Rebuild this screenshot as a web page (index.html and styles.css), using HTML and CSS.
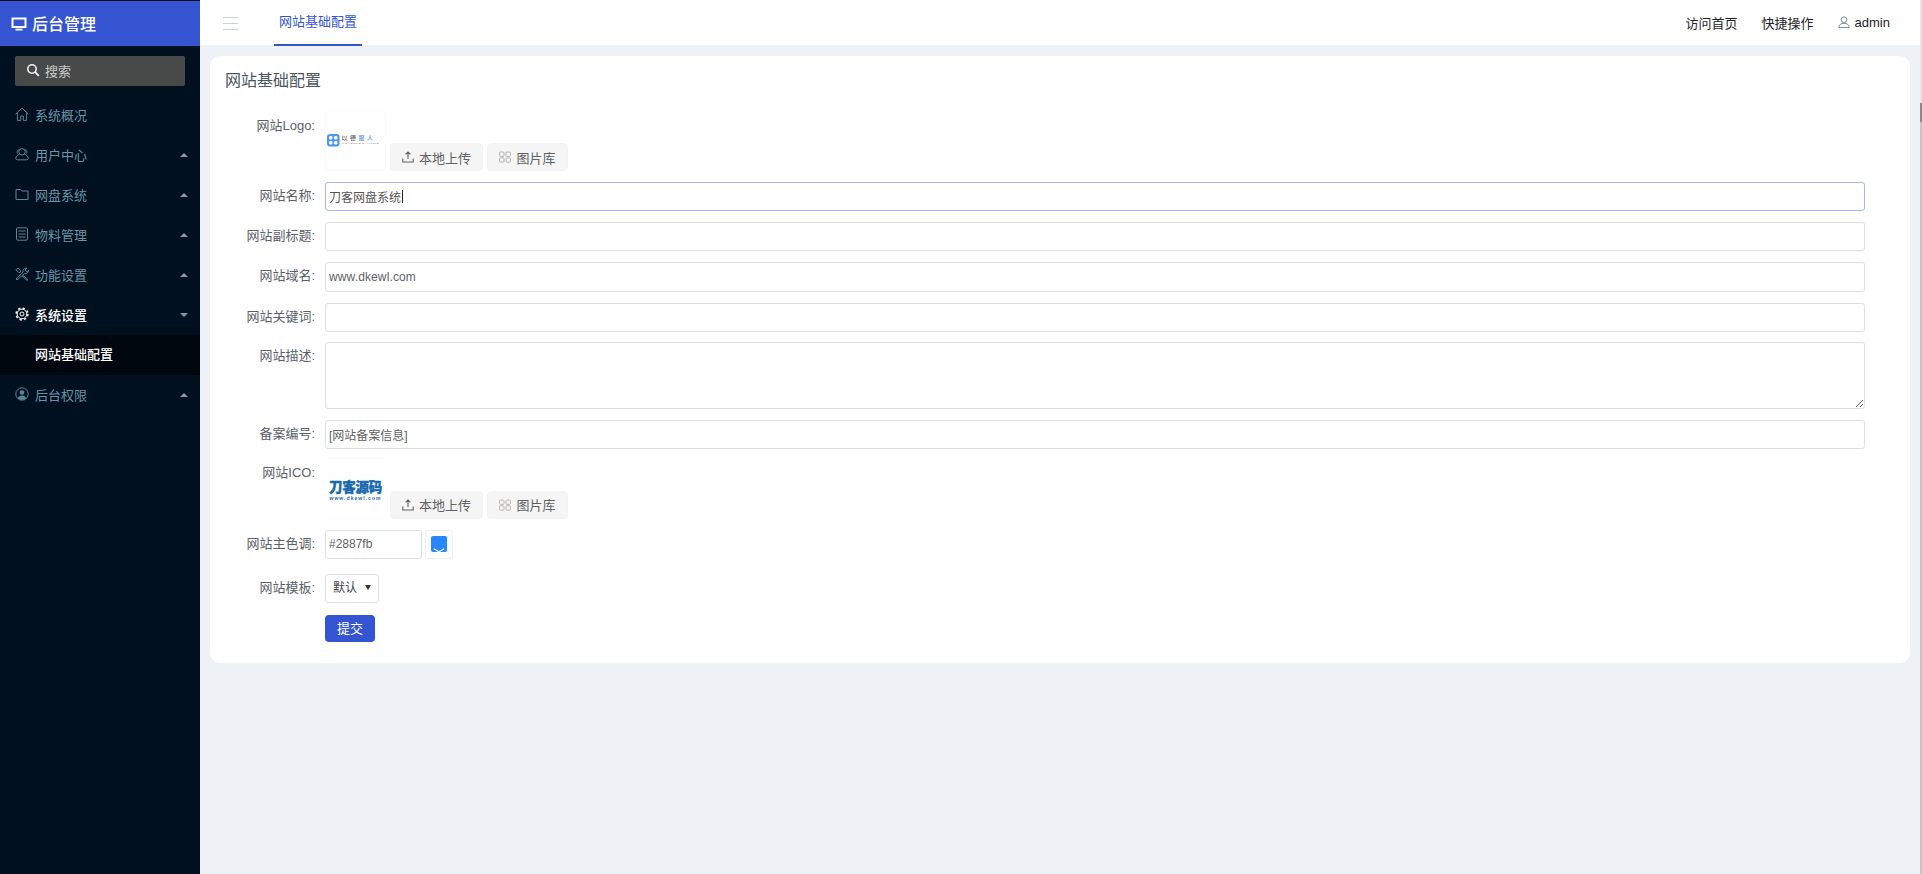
FILE: index.html
```html
<!DOCTYPE html>
<html lang="zh">
<head>
<meta charset="utf-8">
<title>网站基础配置</title>
<link rel="stylesheet" href="styles.css">
</head>
<body>
<div class="app">
  <aside class="sidebar">
    <div class="brand">
      <svg class="brand-icon" viewBox="0 0 16 16"><path d="M1.500 2.500h13v8.600h-13z" fill="none" stroke="currentColor" stroke-width="2"/><path d="M4.500 13.600h7" stroke="currentColor" stroke-width="1.800"/></svg>
      <span>后台管理</span>
    </div>
    <div class="search">
      <svg class="search-icon" viewBox="0 0 14 14"><circle cx="6" cy="6" r="4.200" fill="none" stroke="currentColor" stroke-width="1.600"/><path d="M9.200 9.200l3.600 3.600" stroke="currentColor" stroke-width="1.800"/></svg>
      <span>搜索</span>
    </div>
    <nav class="menu">
      <div class="menu-item">
        <svg class="menu-icon" viewBox="0 0 14 14"><path d="M.6 7.200L7 1l6.400 6.200M2.400 5.600v7.800h3.300V9h2.600v4.400h3.300V5.600" fill="none" stroke="currentColor"/></svg>
        <span>系统概况</span>
      </div>
      <div class="menu-item">
        <svg class="menu-icon" viewBox="0 0 14 14"><g fill="none" stroke="currentColor"><circle cx="7" cy="4.800" r="3.200"/><path d="M4 2.600C2.200 3 1.600 5 2.600 6.600M10 2.600c1.800.4 2.400 2.400 1.400 4"/><path d="M4.400 7.400C2.200 8 .8 9.400.8 11.400c0 .8.6 1.400 1.400 1.400h9.600c.8 0 1.400-.6 1.400-1.400 0-2-1.400-3.400-3.600-4"/></g></svg>
        <span>用户中心</span><i class="caret"></i>
      </div>
      <div class="menu-item">
        <svg class="menu-icon" viewBox="0 0 14 14"><path d="M1 2.500h4.500l1.300 1.500h6.200v8.500H1z" fill="none" stroke="currentColor"/></svg>
        <span>网盘系统</span><i class="caret"></i>
      </div>
      <div class="menu-item">
        <svg class="menu-icon" viewBox="0 0 14 14"><rect x="1.500" y=".8" width="11" height="12.400" rx="1.200" fill="none" stroke="currentColor"/><path d="M3.500 4h7M3.500 7h7M3.500 10h7" stroke="currentColor"/></svg>
        <span>物料管理</span><i class="caret"></i>
      </div>
      <div class="menu-item">
        <svg class="menu-icon" viewBox="0 0 14 14"><g fill="none" stroke="currentColor"><path d="M1 12l7.200-7.200C7.700 2.800 9.200.8 11.800 1L10 3l1 1.200 1.200.6 1.600-1.800c.2 2.600-2 4-4.200 3.400L2 13z"/><path d="M5.400 5.200l.2-1.400L2.800 1 1 2.800l2.800 2.800 1.400-.2M7.600 8l5.400 4.600-.8.8L7 9"/></g></svg>
        <span>功能设置</span><i class="caret"></i>
      </div>
      <div class="menu-item is-open">
        <svg class="menu-icon" viewBox="0 0 14 14"><g fill="none" stroke="currentColor"><circle cx="7" cy="7" r="4.800"/><circle cx="7" cy="7" r="5.900" stroke-width="1.500" stroke-dasharray="2.300 2.330"/><circle cx="7" cy="7" r="2"/></g></svg>
        <span>系统设置</span><i class="caret caret-down"></i>
      </div>
      <div class="menu-sub">网站基础配置</div>
      <div class="menu-item">
        <svg class="menu-icon" viewBox="0 0 14 14"><circle cx="7" cy="7" r="6.200" fill="none" stroke="currentColor"/><circle cx="7" cy="5.500" r="2.300" fill="currentColor"/><path d="M2.800 11.200C3.500 9.300 5 8.500 7 8.500s3.500.8 4.200 2.700A6 6 0 0 1 7 13a6 6 0 0 1-4.200-1.800z" fill="currentColor"/></svg>
        <span>后台权限</span><i class="caret"></i>
      </div>
    </nav>
  </aside>

  <div class="main">
    <header class="topbar">
      <div class="hamburger"><i></i><i></i><i></i></div>
      <div class="tab">网站基础配置</div>
      <div class="top-links">
        <span>访问首页</span>
        <span>快捷操作</span>
        <span class="user">
          <svg class="user-icon" viewBox="0 0 14 14"><circle cx="7" cy="4.300" r="3.300" fill="none" stroke="currentColor"/><path d="M1 13.500c0-3 2-5 6-5s6 2 6 5z" fill="none" stroke="currentColor"/></svg>
          admin
        </span>
      </div>
    </header>

    <section class="card">
      <h1 class="card-title">网站基础配置</h1>
      <form class="form">
        <div class="row row-media">
          <label class="label label-logo">网站Logo:</label>
          <div class="thumb">
            <div class="logo-a">
              <svg class="logo-a-mark" viewBox="0 0 12 12"><rect width="12" height="12" rx="3" fill="#4a96f0"/><g fill="#fff"><rect x="2" y="2" width="3.200" height="3.200" rx="1.200"/><rect x="6.800" y="2" width="3.200" height="3.200" rx="1.200"/><rect x="2" y="6.800" width="3.200" height="3.200" rx="1.200"/><rect x="6.800" y="6.800" width="3.200" height="3.200" rx="1.200"/></g></svg>
              <div class="logo-a-text"><b>以德<em>服人</em></b><small>WIN PEOPLE BY VIRTUE</small></div>
            </div>
          </div>
          <div class="media-btns">
            <button type="button" class="btn btn-upload">
              <svg class="btn-icon" viewBox="0 0 12 12"><path d="M6 8V1.200M3.600 3.400L6 1l2.400 2.400M.8 7.500v3.500h10.400V7.500" fill="none" stroke="#606266" stroke-width="1.100"/></svg>本地上传
            </button>
            <button type="button" class="btn btn-lib">
              <svg class="btn-icon" viewBox="0 0 12 12"><g fill="none" stroke="#b8b4b2" stroke-width="1"><rect x=".6" y="1" width="4.400" height="4.400" rx="1"/><rect x="7" y="1" width="4.400" height="4.400" rx="1"/><rect x=".6" y="6.800" width="4.400" height="4.400" rx="1"/><rect x="7" y="6.800" width="4.400" height="4.400" rx="1"/></g></svg>图片库
            </button>
          </div>
        </div>

        <div class="row">
          <label class="label">网站名称:</label>
          <div class="field has-caret"><input class="input is-focus" type="text" value="刀客网盘系统"></div>
        </div>
        <div class="row">
          <label class="label">网站副标题:</label>
          <div class="field"><input class="input" type="text"></div>
        </div>
        <div class="row">
          <label class="label">网站域名:</label>
          <div class="field"><input class="input input-latin" type="text" value="www.dkewl.com"></div>
        </div>
        <div class="row row-tight">
          <label class="label">网站关键词:</label>
          <div class="field"><input class="input" type="text"></div>
        </div>
        <div class="row">
          <label class="label">网站描述:</label>
          <div class="field"><textarea class="input textarea"></textarea></div>
        </div>
        <div class="row row-before-media">
          <label class="label">备案编号:</label>
          <div class="field"><input class="input" type="text" value="[网站备案信息]"></div>
        </div>
        <div class="row row-media">
          <label class="label label-ico">网站ICO:</label>
          <div class="thumb thumb-ico">
            <div class="logo-b"><b>刀客源码</b><small>www.dkewl.com</small></div>
          </div>
          <div class="media-btns">
            <button type="button" class="btn btn-upload">
              <svg class="btn-icon" viewBox="0 0 12 12"><path d="M6 8V1.200M3.600 3.400L6 1l2.400 2.400M.8 7.500v3.500h10.400V7.500" fill="none" stroke="#606266" stroke-width="1.100"/></svg>本地上传
            </button>
            <button type="button" class="btn btn-lib">
              <svg class="btn-icon" viewBox="0 0 12 12"><g fill="none" stroke="#b8b4b2" stroke-width="1"><rect x=".6" y="1" width="4.400" height="4.400" rx="1"/><rect x="7" y="1" width="4.400" height="4.400" rx="1"/><rect x=".6" y="6.800" width="4.400" height="4.400" rx="1"/><rect x="7" y="6.800" width="4.400" height="4.400" rx="1"/></g></svg>图片库
            </button>
          </div>
        </div>
        <div class="row row-color">
          <label class="label">网站主色调:</label>
          <input class="input input-color" type="text" value="#2887fb">
          <div class="swatch">
            <svg class="swatch-fill" viewBox="0 0 16 16"><rect width="16" height="16" rx="2" fill="#2887fb"/><path d="M2.800 12.800L8 15.800l5.200-3" fill="none" stroke="#fff" stroke-width="1.100"/></svg>
          </div>
        </div>
        <div class="row row-select">
          <label class="label">网站模板:</label>
          <div class="select-wrap">
            <select class="select"><option>默认</option></select>
          </div>
        </div>
        <div class="row row-submit">
          <span class="label"></span>
          <button type="button" class="submit">提交</button>
        </div>
      </form>
    </section>
  </div>
</div>
<div class="scrollbar"></div>
</body>
</html>
```

FILE: styles.css
```css
* { box-sizing: border-box; }
html, body { margin: 0; padding: 0; height: 100%; overflow: hidden; }
body {
  font-family: "Liberation Sans", "Noto Sans CJK SC", sans-serif;
  font-size: 13px;
  color: #606266;
  background: #eef1f5;
}
.app { display: flex; height: 874px; }

/* sidebar */
.sidebar { width: 200px; flex: none; background: #00101e; color: #6c93a6; }
.brand {
  height: 45px;
  margin-top: 1px;
  background: #3454d1;
  color: #fff;
  display: flex;
  align-items: center;
  padding-left: 11px;
  padding-bottom: 1px;
  gap: 5px;
  font-size: 16px;
  font-weight: 500;
}
.brand-icon { width: 16px; height: 16px; margin-top: 1px; }
.search {
  margin: 10px 15px 0;
  height: 30px;
  border-radius: 2px;
  background: #474a49;
  color: #c9cccb;
  display: flex;
  align-items: center;
  padding-left: 11px;
  padding-bottom: 2px;
  gap: 5px;
}
.search-icon { width: 14px; height: 14px; color: #f2f2f2; }
.menu { margin-top: 9px; }
.menu-item {
  height: 40px;
  display: flex;
  align-items: center;
  padding-left: 15px;
  padding-bottom: 2px;
  gap: 6px;
  position: relative;
}
.menu-icon { width: 14px; height: 14px; flex: none; color: #5a8599; }
.menu-item.is-open { color: #fff; font-weight: 500; }
.menu-item.is-open .menu-icon { color: #fff; }
.caret {
  position: absolute;
  right: 12px;
  top: 18px;
  width: 0;
  height: 0;
  border-left: 4px solid transparent;
  border-right: 4px solid transparent;
  border-bottom: 4px solid #7f9aa8;
}
.caret-down { border-bottom: 0; border-top: 4px solid #7f9aa8; }
.menu-sub {
  height: 40px;
  background: #00060e;
  color: #fff;
  font-weight: 500;
  padding-left: 35px;
  line-height: 39px;
}

/* main */
.main { flex: 1; min-width: 0; padding-right: 2px; }
.topbar {
  height: 45px;
  background: #fff;
  display: flex;
  align-items: stretch;
  padding-left: 23px;
}
.hamburger {
  width: 15px;
  margin-top: 17px;
  height: 13px;
  display: flex;
  flex-direction: column;
  justify-content: space-between;
}
.hamburger i { display: block; height: 1px; background: #c6d2dc; }
.tab {
  margin-left: 36px;
  width: 88px;
  height: 46px;
  padding-top: 12px;
  text-align: center;
  color: #3454d1;
  border-bottom: 2px solid #3454d1;
  line-height: 20px;
}
.top-links {
  margin-left: auto;
  margin-right: 30px;
  display: flex;
  align-items: center;
  gap: 24px;
  padding-bottom: 1px;
  color: #1f2329;
}
.user { display: flex; align-items: center; gap: 5px; }
.user-icon { width: 12px; height: 12px; color: #6b7480; }

.card {
  margin: 11px 10px 0;
  height: 607px;
  background: #fff;
  border-radius: 10px;
  padding: 15px;
}
.card-title {
  margin: 0 0 19px;
  font-size: 16px;
  line-height: 20px;
  font-weight: 400;
  color: #4a5560;
}
.row { display: flex; align-items: flex-start; margin-bottom: 11px; }
.row-tight { margin-bottom: 10px; }
.row-before-media { margin-bottom: 9px; }
.row-color { margin-bottom: 15px; }
.row-select { margin-bottom: 12px; }
.row-submit { margin-bottom: 0; }
.label {
  width: 90px;
  flex: none;
  margin-right: 10px;
  text-align: right;
  line-height: 27px;
  color: #5c6068;
}
.label-logo { padding-top: 2px; }
.label-ico { padding-top: 1px; }
.field { position: relative; width: 1540px; }
.has-caret::after {
  content: "";
  position: absolute;
  left: 77px;
  top: 8px;
  width: 1px;
  height: 13px;
  background: #222;
}
.input {
  display: block;
  width: 100%;
  height: 29.200px;
  padding: 0 3px;
  border: 1px solid #dcdfe3;
  border-radius: 3px;
  font: 12px "Liberation Sans", "Noto Sans CJK SC", sans-serif;
  color: #606266;
  background: #fff;
  outline: none;
}
.input-latin { letter-spacing: .12px; }
.is-focus { border-color: #a9b8ea; color: #555; }
.textarea { height: 67px; resize: both; padding-top: 3px; }
.input-color { width: 97px; height: 29px; }

.thumb {
  width: 61px;
  height: 61px;
  flex: none;
  border: 1px solid #fafafa;
  border-radius: 4px;
  background: #fff;
  display: flex;
  align-items: center;
  justify-content: center;
  overflow: hidden;
}
.thumb-ico { border-left-color: transparent; border-right-color: transparent; border-radius: 0; }
.logo-a { display: flex; align-items: center; gap: 2px; width: 59px; padding-left: 1px; }
.logo-a-mark { width: 12.500px; height: 12.500px; flex: none; }
.logo-a-text { display: flex; flex-direction: column; line-height: 1; }
.logo-a-text b { font-size: 6px; letter-spacing: 2.500px; font-weight: 500; color: #555; line-height: 7px; white-space: nowrap; }
.logo-a-text em { font-style: normal; color: #5b93d8; }
.logo-a-text small { font-size: 2.500px; color: #777; line-height: 4px; white-space: nowrap; letter-spacing: .4px; }
.logo-b { width: 59px; padding-top: 4px; text-align: center; color: #1868ae; line-height: 1; }
.logo-b b { display: block; font-size: 13.500px; font-weight: 900; line-height: 15px; letter-spacing: -.300px; white-space: nowrap; -webkit-text-stroke: .35px #1868ae; }
.logo-b small { display: block; font-size: 5px; font-weight: 700; line-height: 6px; letter-spacing: 1.050px; white-space: nowrap; }

.media-btns { display: flex; align-self: flex-end; gap: 4px; margin-left: 4px; }
.btn {
  height: 28px;
  border: 1px solid #f3f3f3;
  border-radius: 4px;
  background: #f5f5f5;
  color: #606266;
  font: 13px "Liberation Sans", "Noto Sans CJK SC", sans-serif;
  display: flex;
  align-items: center;
  justify-content: center;
  gap: 5px;
  padding: 0;
}
.btn-upload { width: 93px; }
.btn-lib { width: 81px; }
.btn-icon { width: 12px; height: 12px; }

.swatch {
  width: 28px;
  height: 29px;
  margin-left: 3px;
  border: 1px solid #f0f0f0;
  border-radius: 3px;
  display: flex;
  align-items: center;
  justify-content: center;
}
.swatch-fill { width: 16px; height: 16px; }

.select-wrap { position: relative; width: 54px; height: 29px; }
.select-wrap::after {
  content: "";
  position: absolute;
  right: 8px;
  top: 11px;
  border-left: 3px solid transparent;
  border-right: 3px solid transparent;
  border-top: 5px solid #333;
}
.select {
  appearance: none;
  width: 100%;
  height: 100%;
  border: 1px solid #dcdfe3;
  border-radius: 3px;
  background: #fff;
  padding-left: 7px;
  font: 12px "Liberation Sans", "Noto Sans CJK SC", sans-serif;
  color: #444;
  outline: none;
}
.submit {
  width: 50px;
  height: 27px;
  border: 0;
  border-radius: 4px;
  background: #3454d1;
  color: #fff;
  font: 13px "Liberation Sans", "Noto Sans CJK SC", sans-serif;
  padding: 0 0 1px;
}
.scrollbar {
  position: fixed;
  right: 0;
  top: 0;
  bottom: 0;
  width: 2px;
  background: linear-gradient(to bottom, #e6e6e6 0, #e6e6e6 103px, #8a8a8a 103px, #8a8a8a 122px, #c6c6c6 122px);
}
```
